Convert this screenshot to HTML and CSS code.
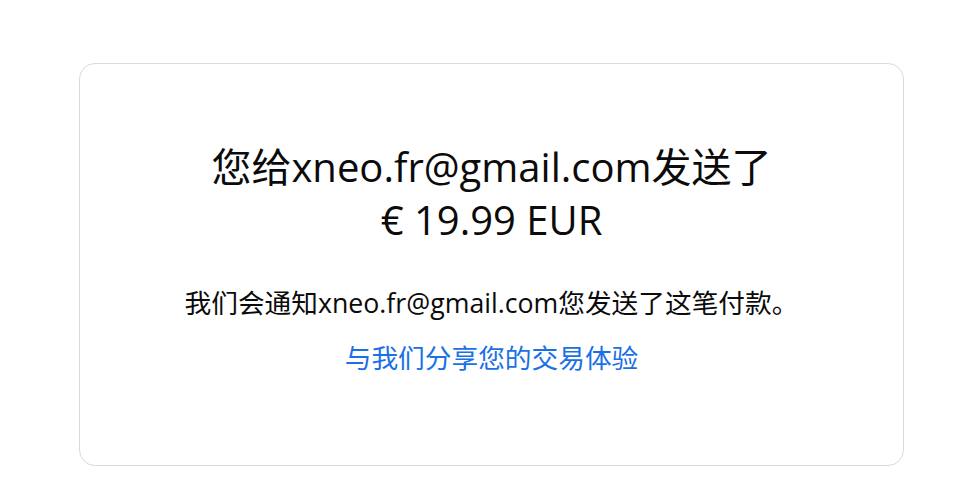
FILE: index.html
```html
<!DOCTYPE html>
<html lang="zh-CN">
<head>
<meta charset="utf-8">
<title>付款已发送</title>
<link rel="stylesheet" href="styles.css">
</head>
<body>
  <main class="page">
    <section class="card">
      <h1 class="title">您给xneo.fr@gmail.com发送了<br>€ 19.99 EUR</h1>
      <p class="note">我们会通知xneo.fr@gmail.com您发送了这笔付款。</p>
      <a class="share" href="#">与我们分享您的交易体验</a>
    </section>
  </main>
</body>
</html>
```

FILE: styles.css
```css
html, body {
  margin: 0;
  padding: 0;
  background: #ffffff;
}

body {
  font-family: "Open Sans", "Noto Sans CJK SC", sans-serif;
  color: #111111;
}

.page {
  padding: 63px 0 0 79px;
}

.card {
  box-sizing: border-box;
  width: 825px;
  border: 1px solid #dcdad3;
  border-radius: 16px;
  padding: 76px 24px 89px;
  display: flex;
  flex-direction: column;
  align-items: center;
  text-align: center;
}

.title {
  margin: 0;
  font-size: 40px;
  line-height: 53px;
  font-weight: 400;
  color: #0b0b0b;
}

.note {
  margin: 39px 0 0;
  font-size: 26.7px;
  line-height: 36px;
  color: #0b0b0b;
}

.share {
  margin-top: 19px;
  font-size: 26.7px;
  line-height: 36px;
  color: #1a70e6;
  text-decoration: none;
}
```
